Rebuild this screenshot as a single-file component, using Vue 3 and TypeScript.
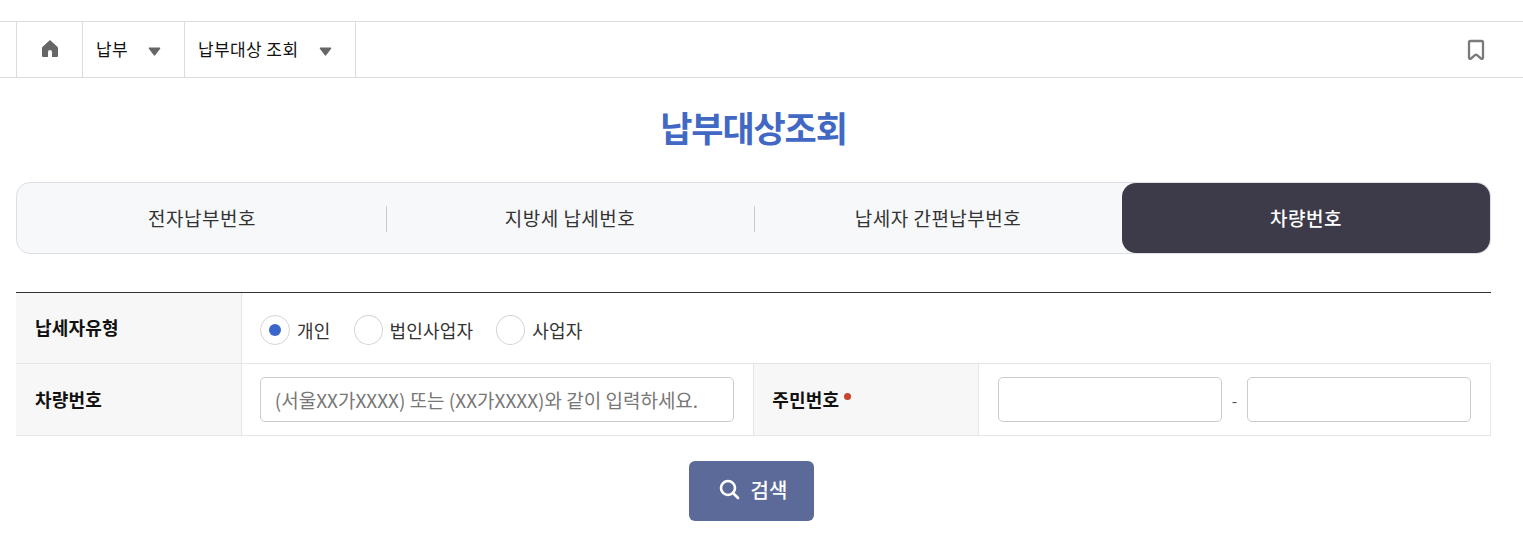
<script setup lang="ts">
const tabs: string[] = ['전자납부번호', '지방세 납세번호', '납세자 간편납부번호', '차량번호']
const radios: string[] = ['개인', '법인사업자', '사업자']
</script>

<template>
  <div class="page">
    <nav class="crumbs">
      <div class="crumb home">
        <svg width="18" height="19" viewBox="0 0 18 19"><path d="M9 1 L16.6 8 Q17 8.4 17 9 V17 Q17 18 16 18 H11 V13 A2 2 0 0 0 7 13 V18 H2 Q1 18 1 17 V9 Q1 8.4 1.4 8 Z" fill="#666" /></svg>
      </div>
      <div class="crumb c1">
        <span>납부</span>
        <svg class="tri" width="13" height="9" viewBox="0 0 13 9"><path d="M1.5 1.2 H11.5 L6.5 7.8 Z" fill="#666" stroke="#666" stroke-width="1.6" stroke-linejoin="round" /></svg>
      </div>
      <div class="crumb c2">
        <span>납부대상 조회</span>
        <svg class="tri" width="13" height="9" viewBox="0 0 13 9"><path d="M1.5 1.2 H11.5 L6.5 7.8 Z" fill="#666" stroke="#666" stroke-width="1.6" stroke-linejoin="round" /></svg>
      </div>
      <div class="spacer"></div>
      <svg class="mark" width="18" height="22" viewBox="0 0 18 22"><path d="M3.5 2 H14.5 A1.5 1.5 0 0 1 16 3.5 V18.6 C16 19.8 14.9 20.2 14 19.5 L10 16.2 Q9 15.4 8 16.2 L4 19.5 C3.1 20.2 2 19.8 2 18.6 V3.5 A1.5 1.5 0 0 1 3.5 2 Z" fill="none" stroke="#7a7a7a" stroke-width="2.3" /></svg>
    </nav>

    <h1 class="title">납부대상조회</h1>

    <div class="tabs">
      <div v-for="(t, i) in tabs" :key="t" class="tab" :class="{ on: i === 3, sep: i < 2 }">{{ t }}</div>
    </div>

    <div class="form">
      <div class="row r1">
        <div class="th">납세자유형</div>
        <div class="td radios">
          <label v-for="(r, i) in radios" :key="r" class="radio">
            <span class="dot" :class="{ checked: i === 0 }"></span>{{ r }}
          </label>
        </div>
      </div>
      <div class="row r2">
        <div class="th">차량번호</div>
        <div class="td car">
          <input class="inp" placeholder="(서울XX가XXXX) 또는 (XX가XXXX)와 같이 입력하세요." />
        </div>
        <div class="th th2">주민번호<i class="req"></i></div>
        <div class="td id">
          <input class="inp" />
          <span class="dash">-</span>
          <input class="inp" />
        </div>
      </div>
    </div>

    <div class="actions">
      <button class="search" type="button">
        <svg width="22" height="22" viewBox="0 0 22 22"><circle cx="10" cy="10" r="7" fill="none" stroke="#fff" stroke-width="2.6" /><path d="M15 15 L20 20" stroke="#fff" stroke-width="2.6" stroke-linecap="round" /></svg>
        <span>검색</span>
      </button>
    </div>
  </div>
</template>

<style>
html, body { margin: 0; background: #fff; }
</style>

<style scoped>
.page {
  width: 1523px;
  height: 560px;
  overflow: hidden;
  padding-top: 21px;
  box-sizing: border-box;
  font-family: "Noto Sans CJK KR", "Noto Sans", sans-serif;
  color: #111;
}
.crumbs {
  display: flex;
  align-items: center;
  height: 57px;
  box-sizing: border-box;
  border-top: 1px solid #dcdcdc;
  border-bottom: 1px solid #dcdcdc;
  padding-left: 16px;
  padding-right: 38px;
}
.crumb {
  display: flex;
  align-items: center;
  height: 100%;
  box-sizing: border-box;
  border-left: 1px solid #dcdcdc;
  font-size: 17px;
  letter-spacing: 0.4px;
  padding-bottom: 2px;
}
.home { width: 66px; justify-content: center; }
.c1 { width: 102px; padding-left: 13px; justify-content: space-between; padding-right: 23px; }
.c2 { width: 172px; padding-left: 13px; justify-content: space-between; padding-right: 23px; border-right: 1px solid #dcdcdc; }
.tri { margin-top: 5px; }
.spacer { flex: 1; }
.title {
  margin: 0;
  height: 104px;
  line-height: 98px;
  text-align: center;
  font-size: 35px;
  font-weight: 700;
  letter-spacing: -1.1px;
  color: #4169c4;
  padding-right: 16px;
}
.tabs {
  margin: 0 32px 0 16px;
  height: 72px;
  box-sizing: border-box;
  display: grid;
  grid-template-columns: repeat(4, 1fr);
  padding-left: 1px;
  background: #f7f8fa;
  border: 1px solid #dcdfe3;
  border-radius: 14px;
}
.tab {
  position: relative;
  display: flex;
  align-items: center;
  justify-content: center;
  font-size: 19px;
  letter-spacing: 0.5px;
  color: #333;
  padding-bottom: 2px;
}
.tab.sep::after {
  content: "";
  position: absolute;
  right: -1px;
  top: 23px;
  height: 26px;
  width: 1px;
  background: #ccc;
}
.tab.on {
  background: #3d3b4a;
  color: #fff;
  font-weight: 500;
  border-radius: 14px;
}
.form {
  margin: 38px 32px 0 16px;
  border-top: 1px solid #333;
}
.row {
  display: flex;
  border-bottom: 1px solid #e6e6e6;
  box-sizing: border-box;
}
.r1 { height: 71px; }
.r2 { height: 72px; border-right: 1px solid #e6e6e6; }
.th {
  width: 226px;
  box-sizing: border-box;
  padding-left: 19px;
  background: #f7f7f7;
  border-right: 1px solid #e6e6e6;
  display: flex;
  align-items: center;
  font-size: 18px;
  font-weight: 700;
  letter-spacing: 0.2px;
  padding-bottom: 2px;
}
.th2 { border-left: 1px solid #e6e6e6; padding-left: 18px; }
.td { display: flex; align-items: center; box-sizing: border-box; }
.radios { padding-left: 18px; gap: 23px; padding-top: 3px; }
.radio {
  display: flex;
  align-items: center;
  gap: 7px;
  font-size: 18px;
  letter-spacing: 0.2px;
  color: #333;
}
.dot {
  width: 29px;
  height: 30px;
  box-sizing: border-box;
  border: 1px solid #d4d4d4;
  border-radius: 50%;
  background: #fff;
  display: flex;
  align-items: center;
  justify-content: center;
}
.dot.checked { width: 30px; }
.dot.checked::after {
  content: "";
  width: 12px;
  height: 12px;
  border-radius: 50%;
  background: #3a66cc;
}
.car { width: 512px; padding: 0 19px 0 18px; }
.id { flex: 1; padding: 0 19px; gap: 0; }
.inp {
  height: 45px;
  box-sizing: border-box;
  border: 1px solid #ccc;
  border-radius: 5px;
  background: #fff;
  font-family: inherit;
  font-size: 19px;
  letter-spacing: 0;
  padding: 0 14px;
  outline: none;
  width: 100%;
  min-width: 0;
}
.inp::placeholder { color: #777; opacity: 1; }
.id .inp { width: 224px; flex: none; }
.dash { width: 25px; text-align: center; color: #555; font-size: 16px; }
.req {
  width: 7px;
  height: 7px;
  border-radius: 50%;
  background: #c8452a;
  margin-left: 5px;
  margin-bottom: 4px;
}
.actions { display: flex; justify-content: center; padding: 25px 36px 0 16px; }
.search {
  width: 125px;
  height: 60px;
  border: 0;
  border-radius: 6px;
  background: #5c6a9a;
  color: #fff;
  font-family: inherit;
  font-size: 20px;
  font-weight: 500;
  display: flex;
  align-items: center;
  justify-content: center;
  gap: 11px;
  padding: 0 0 4px 2px;
}
</style>
